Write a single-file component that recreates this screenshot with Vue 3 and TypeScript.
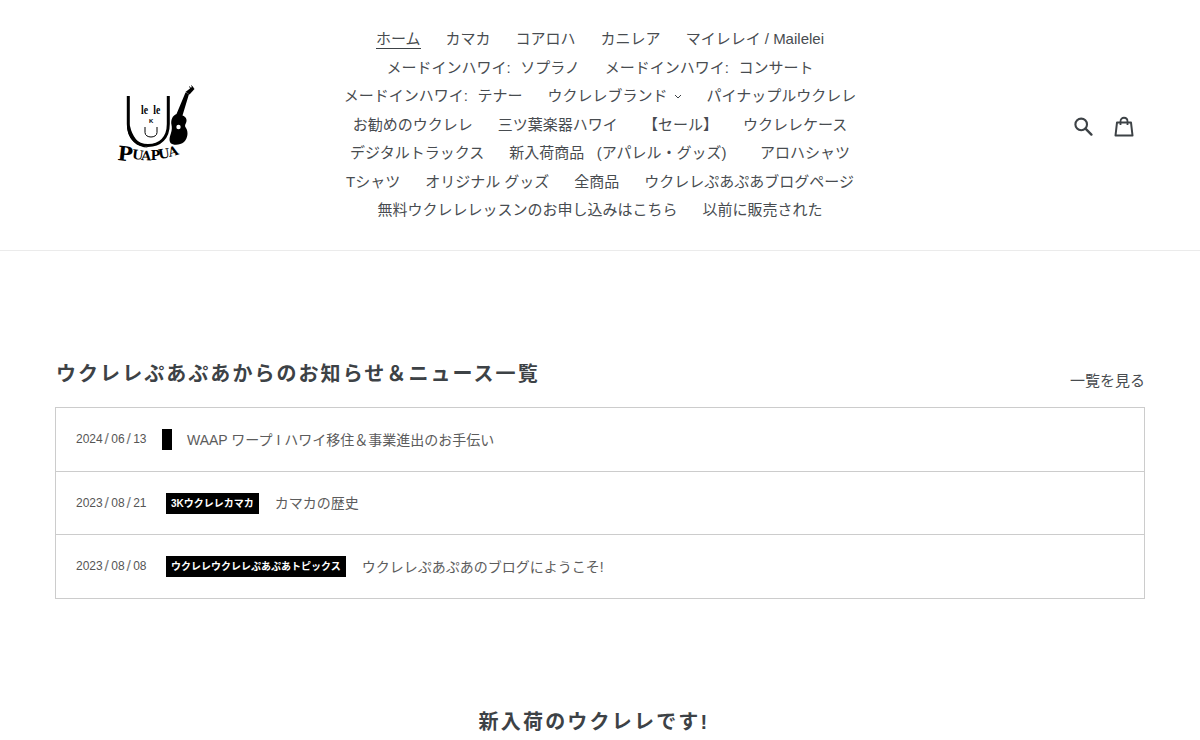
<script setup lang="ts">
interface NavItem { label: string; active?: boolean; caret?: boolean }
interface NewsItem { date: string; tag: string; title: string }

const nav: NavItem[] = [
  { label: 'ホーム', active: true },
  { label: 'カマカ' },
  { label: 'コアロハ' },
  { label: 'カニレア' },
  { label: 'マイレレイ / Mailelei' },
  { label: 'メードインハワイ:  \u200aソプラノ' },
  { label: 'メードインハワイ:  \u200aコンサート' },
  { label: 'メードインハワイ:  \u200aテナー' },
  { label: 'ウクレレブランド', caret: true },
  { label: 'パイナップルウクレレ' },
  { label: 'お勧めのウクレレ' },
  { label: '三ツ葉楽器ハワイ' },
  { label: '【セール】' },
  { label: 'ウクレレケース' },
  { label: 'デジタルトラックス' },
  { label: '新入荷商品   (アパレル・グッズ)  ' },
  { label: 'アロハシャツ' },
  { label: 'Tシャツ' },
  { label: 'オリジナル グッズ' },
  { label: '全商品' },
  { label: 'ウクレレぷあぷあブログページ' },
  { label: '無料ウクレレレッスンのお申し込みはこちら' },
  { label: '以前に販売された' },
]

const news: NewsItem[] = [
  { date: '2024/06/13', tag: '', title: 'WAAP ワープ I ハワイ移住＆事業進出のお手伝い' },
  { date: '2023/08/21', tag: '3Kウクレレカマカ', title: 'カマカの歴史' },
  { date: '2023/08/08', tag: 'ウクレレウクレレぷあぷあトピックス', title: 'ウクレレぷあぷあのブログにようこそ!' },
]
</script>

<template>
  <div class="page">
    <header class="header">
      <a class="logo" aria-label="Ukulele PuaPua">
        <svg width="90" height="90" viewBox="0 0 90 90">
          <path d="M18.3 18 V46 C18.3 60 27 67.5 38 67.5 C50 67.5 58.3 60 58.3 46 V18" fill="none" stroke="#000" stroke-width="3" />
          <path d="M17 48 C18 62 27 69.5 38 69.5 C28 66 22 58 20 48 Z" fill="#000" />
          <path d="M35 49 V54.5 C35 60.5 47 60.5 47 54.5 V49" fill="none" stroke="#000" stroke-width="1" />
          <path d="M66.5 36 L75.5 14.5 L79 16 L72.5 37.5 C76 38.5 77.5 42 76 45 C75 47 74.5 48 76 50 C78.5 54 78 60 74 64 C70 67.5 63 67.5 60.5 65 C58.5 62 60 58 61 55 C62 52 62 49 61.5 47 C60.5 42 62.5 37.5 66.5 36 Z" fill="#000" />
          <path d="M75.5 14 L82.5 8.5 L84.5 11 L79.5 16.5 Z" fill="#000" />
          <path d="M79.5 8.5 L81 11 M81.5 7.5 L83 10" stroke="#000" stroke-width="1" />
          <circle cx="68.5" cy="49" r="2.2" fill="#fff" />
          <text x="31" y="36" class="logo-le" textLength="7" lengthAdjust="spacingAndGlyphs">le</text>
          <text x="43.3" y="36" class="logo-le" textLength="7" lengthAdjust="spacingAndGlyphs">le</text>
          <text x="39" y="44.5" class="logo-k">K</text>
          <text transform="translate(7 82) rotate(6)" class="logo-big">P</text>
          <text transform="translate(21.5 80.5) rotate(8)" class="logo-mid">U</text>
          <text transform="translate(31 82) rotate(3)" class="logo-mid">A</text>
          <text transform="translate(40.5 82) rotate(0)" class="logo-mid">P</text>
          <text transform="translate(49 81) rotate(-9)" class="logo-mid">U</text>
          <text transform="translate(59.5 79) rotate(-15)" class="logo-mid">A</text>
        </svg>
      </a>

      <nav class="nav">
        <a v-for="item in nav" :key="item.label" class="nav-item">
          <span :class="{ 'nav-active': item.active }">{{ item.label }}</span>
          <svg v-if="item.caret" class="caret" width="8" height="5" viewBox="0 0 8 5">
            <path d="M1 1 L4 4 L7 1" fill="none" stroke="#3d4246" stroke-width="1" />
          </svg>
        </a>
      </nav>

      <div class="icons">
        <svg width="20" height="20" viewBox="0 0 20 20" aria-label="Search">
          <circle cx="8.2" cy="8.4" r="5.8" fill="none" stroke="#3d4246" stroke-width="2.1" />
          <path d="M12.5 12.7 L18.4 18.6" stroke="#3d4246" stroke-width="2.4" stroke-linecap="round" />
        </svg>
        <svg width="20" height="21" viewBox="0 0 20 21" aria-label="Cart">
          <path d="M3 6.5 H17 L18.5 19.5 H1.5 Z" fill="none" stroke="#3d4246" stroke-width="2" stroke-linejoin="round" />
          <path d="M6.5 9 V5.5 C6.5 0.5 13.5 0.5 13.5 5.5 V9" fill="none" stroke="#3d4246" stroke-width="1.8" />
        </svg>
      </div>
    </header>

    <main class="main">
      <div class="news-head">
        <h2 class="news-title">ウクレレぷあぷあからのお知らせ＆ニュース一覧</h2>
        <a class="more">一覧を見る</a>
      </div>
      <ul class="news">
        <li v-for="n in news" :key="n.date" class="news-row">
          <span class="date">
            <template v-for="(part, i) in n.date.split('/')" :key="i">
              <span v-if="i > 0" class="slash">/</span>{{ part }}
            </template>
          </span>
          <span class="tag" :class="{ 'tag-empty': !n.tag }">{{ n.tag }}</span>
          <span class="row-title">{{ n.title }}</span>
        </li>
      </ul>
      <h2 class="section-title">新入荷のウクレレです!</h2>
    </main>
  </div>
</template>

<style>
html, body { margin: 0; background: #fff; }
</style>

<style scoped>
.page {
  font-family: "Liberation Sans", "Noto Sans CJK JP", sans-serif;
  color: #3d4246;
}
.header {
  display: grid;
  grid-template-columns: 260px 1fr 260px;
  align-items: center;
  padding: 25px 55px 25px;
  border-bottom: 1px solid #ebebeb;
  height: 200px;
}
.logo { display: block; margin: 0 0 4px 55px; height: 90px; }
.logo svg { display: block; }
.logo-le { font: 700 12px "Liberation Serif", serif; fill: #000; }
.logo-k { font: 700 6px "Liberation Sans", sans-serif; fill: #000; }
.logo-big { font: 700 20px "DejaVu Serif", serif; fill: #000; }
.logo-mid { font: 700 13px "DejaVu Serif", serif; fill: #000; }
.nav {
  display: flex;
  flex-wrap: wrap;
  justify-content: center;
  align-content: flex-start;
  height: 200px;
  color: #484c50;
}
.nav-item {
  padding: 0 12.5px;
  font-size: 15px;
  line-height: 28.5px;
  white-space: pre;
}
.nav-active { border-bottom: 1px solid #3d4246; padding-bottom: 1px; }
.caret { margin-left: 6px; vertical-align: 2px; }
.icons {
  display: flex;
  justify-content: flex-end;
  align-items: center;
  gap: 21px;
  padding-right: 11px;
  margin-top: 2px;
}
.main { padding: 106px 55px 0; }
.news-head {
  display: flex;
  justify-content: space-between;
  align-items: flex-end;
  height: 50px;
}
.news-title {
  margin: 0 0 17px 1px;
  font-size: 20px;
  font-weight: 700;
  letter-spacing: 2.05px;
  line-height: 32px;
}
.more { font-size: 15px; line-height: 22px; margin-bottom: 15px; color: #484c50; }
.news {
  list-style: none;
  margin: 0;
  padding: 0;
  border: 1px solid #ccc;
}
.news-row {
  display: flex;
  align-items: center;
  height: 62.7px;
  padding: 0 20px;
  border-top: 1px solid #ccc;
}
.news-row:first-child { border-top: 0; }
.date { font-size: 12px; line-height: 14px; margin-bottom: 0.6px; width: 70px; color: #555; white-space: nowrap; }
.slash { display: inline-block; margin: 0 2.6px; transform: scale(1.3, 1.15); color: #777; }
.tag {
  margin: 0 16px 0 20px;
  padding: 0 5px;
  height: 21px;
  line-height: 21px;
  background: #000;
  color: #fff;
  font-size: 10px;
  font-weight: 700;
  white-space: nowrap;
}
.tag-empty { margin: 0 15px 0 16px; }
.row-title { font-size: 14px; margin-bottom: 1.2px; color: #5c5c5c; }
.section-title {
  margin: 107px 12px 0 0;
  text-align: center;
  font-size: 20px;
  font-weight: 700;
  letter-spacing: 2.2px;
  line-height: 32px;
}
</style>
